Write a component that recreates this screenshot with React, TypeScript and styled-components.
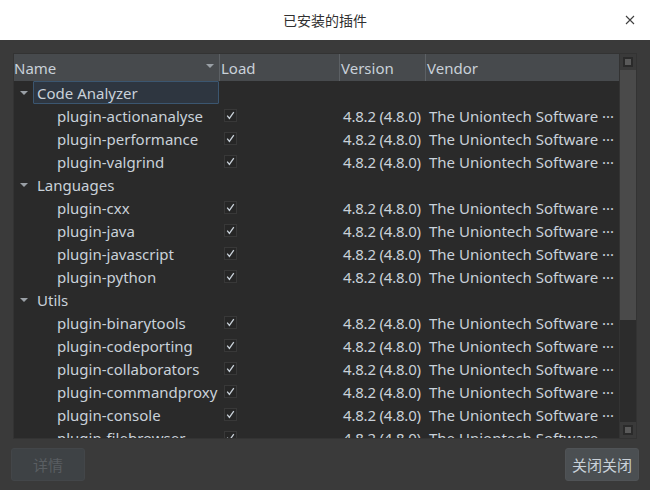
import styled, { createGlobalStyle } from "styled-components";

const Global = createGlobalStyle`
  html, body {
    margin: 0;
    padding: 0;
    background: #3a3a3a;
  }
  body {
    font-family: "Noto Sans", "Noto Sans CJK SC", sans-serif;
  }
`;

const Window = styled.div`
  width: 650px;
  height: 490px;
  display: flex;
  flex-direction: column;
  background: #3a3a3a;
  overflow: hidden;
`;

const TitleBar = styled.div`
  height: 40px;
  flex: none;
  background: #ffffff;
  display: flex;
  align-items: center;
  justify-content: center;
  position: relative;
  font-size: 14px;
  color: #303030;
  font-family: "Noto Sans CJK SC", "Noto Sans", sans-serif;
`;

const Close = styled.span`
  position: absolute;
  right: 12px;
  top: 12px;
  width: 16px;
  height: 16px;
  display: flex;
  align-items: center;
  justify-content: center;
`;

const Body = styled.div`
  flex: 1;
  display: flex;
  flex-direction: column;
  padding: 13px 13px 11px 13px;
  gap: 9px;
`;

const Frame = styled.div`
  height: 384px;
  display: flex;
  border: 1px solid #333333;
  background: #2a2a2a;
  overflow: hidden;
`;

const TableArea = styled.div`
  flex: 1;
  display: flex;
  flex-direction: column;
  overflow: hidden;
`;

const Grid = styled.div`
  display: grid;
  grid-template-columns: 205px 120px 86px 195px;
`;

const Header = styled(Grid)`
  height: 27px;
  background: #474a4d;
  flex: none;
`;

const HeadCell = styled.div<{ $first?: boolean }>`
  display: flex;
  align-items: center;
  justify-content: space-between;
  padding: 1px 8px 0 ${(p) => (p.$first ? "0" : "1px")};
  border-left: ${(p) => (p.$first ? "none" : "1px solid #5c6064")};
  color: #c9d1d9;
  font-size: 15px;
`;

const SortArrow = styled.span`
  width: 0;
  height: 0;
  border-left: 4px solid transparent;
  border-right: 4px solid transparent;
  border-top: 4px solid #9aa0a6;
  margin-right: -3px;
  margin-top: -4px;
`;

const Row = styled(Grid)`
  height: 23px;
  align-items: center;
  color: #c9d1d9;
  font-size: 15px;
  white-space: nowrap;
`;

const GroupCell = styled.div`
  grid-column: 1 / 2;
  display: flex;
  align-items: center;
  height: 22px;
  padding-left: 6px;
`;

const Expander = styled.span`
  width: 0;
  height: 0;
  border-left: 4px solid transparent;
  border-right: 4px solid transparent;
  border-top: 4px solid #9aa0a6;
  margin-right: 8px;
`;

const GroupLabel = styled.span<{ $current?: boolean }>`
  flex: 1;
  height: 21px;
  display: flex;
  align-items: center;
  padding-left: 3px;
  margin-left: -3px;
  border: 1px solid ${(p) => (p.$current ? "#3b5670" : "transparent")};
  background: ${(p) => (p.$current ? "#2e3640" : "transparent")};
  border-radius: 1px;
`;

const NameCell = styled.div`
  padding-left: 43px;
`;

const CheckCell = styled.div`
  padding-left: 5px;
  display: flex;
  align-items: center;
`;

const CheckBox = styled.span`
  width: 11px;
  height: 11px;
  border: 1px solid #383838;
  background: #262626;
  display: flex;
  align-items: center;
  justify-content: center;
`;

const VersionCell = styled.div`
  padding-left: 4px;
  letter-spacing: -0.2px;
`;

const VendorCell = styled.div`
  padding-left: 4px;
  overflow: hidden;
`;

const ScrollBar = styled.div`
  width: 16px;
  flex: none;
  display: flex;
  flex-direction: column;
  background: #2c2c2c;
  border-left: 1px solid #333;
`;

const ScrollButton = styled.div`
  height: 16px;
  flex: none;
  background: #3a3a3a;
  display: flex;
  align-items: center;
  justify-content: center;
  &::after {
    content: "";
    width: 6px;
    height: 6px;
    border: 2px solid #2a2a2a;
    background: #5a5a5a;
  }
`;

const Handle = styled.div`
  height: 250px;
  flex: none;
  background: #4a4a4a;
`;

const Track = styled.div`
  flex: 1;
`;

const Footer = styled.div`
  display: flex;
  justify-content: space-between;
  margin: 0 -2px;
`;

const Button = styled.button<{ $disabled?: boolean }>`
  width: 74px;
  height: 33px;
  border-radius: 3px;
  border: 1px solid ${(p) => (p.$disabled ? "#434649" : "#505356")};
  background: ${(p) => (p.$disabled ? "#3e4245" : "#4b4f52")};
  color: ${(p) => (p.$disabled ? "#5a5e62" : "#c9d1d9")};
  font-family: "Noto Sans CJK SC", "Noto Sans", sans-serif;
  font-size: 15px;
  padding: 0;
`;

const groups: { name: string; plugins: string[] }[] = [
  {
    name: "Code Analyzer",
    plugins: ["plugin-actionanalyse", "plugin-performance", "plugin-valgrind"],
  },
  {
    name: "Languages",
    plugins: ["plugin-cxx", "plugin-java", "plugin-javascript", "plugin-python"],
  },
  {
    name: "Utils",
    plugins: [
      "plugin-binarytools",
      "plugin-codeporting",
      "plugin-collaborators",
      "plugin-commandproxy",
      "plugin-console",
      "plugin-filebrowser",
    ],
  },
];

const Check = () => (
  <CheckBox>
    <svg width="9" height="9" viewBox="0 0 9 9">
      <path d="M1.2 4.6 L3.4 7.4 L7.8 1.2" fill="none" stroke="#c9d1d9" strokeWidth="1.3" />
    </svg>
  </CheckBox>
);

const App = () => {
  return (
    <Window>
      <Global />
      <TitleBar>
        已安装的插件
        <Close>
          <svg width="10" height="10" viewBox="0 0 10 10">
            <path d="M1 1 L9 9 M9 1 L1 9" stroke="#404040" strokeWidth="1.1" />
          </svg>
        </Close>
      </TitleBar>
      <Body>
        <Frame>
          <TableArea>
            <Header>
              <HeadCell $first>
                Name
                <SortArrow />
              </HeadCell>
              <HeadCell>Load</HeadCell>
              <HeadCell>Version</HeadCell>
              <HeadCell>Vendor</HeadCell>
            </Header>
            {groups.map((g, gi) => (
              <div key={g.name}>
                <Row>
                  <GroupCell>
                    <Expander />
                    <GroupLabel $current={gi === 0}>{g.name}</GroupLabel>
                  </GroupCell>
                </Row>
                {g.plugins.map((p) => (
                  <Row key={p}>
                    <NameCell>{p}</NameCell>
                    <CheckCell>
                      <Check />
                    </CheckCell>
                    <VersionCell>4.8.2 (4.8.0)</VersionCell>
                    <VendorCell>The Uniontech Software ···</VendorCell>
                  </Row>
                ))}
              </div>
            ))}
          </TableArea>
          <ScrollBar>
            <ScrollButton />
            <Handle />
            <Track />
            <ScrollButton />
          </ScrollBar>
        </Frame>
        <Footer>
          <Button $disabled>详情</Button>
          <Button>关闭关闭</Button>
        </Footer>
      </Body>
    </Window>
  );
};

export default App;
